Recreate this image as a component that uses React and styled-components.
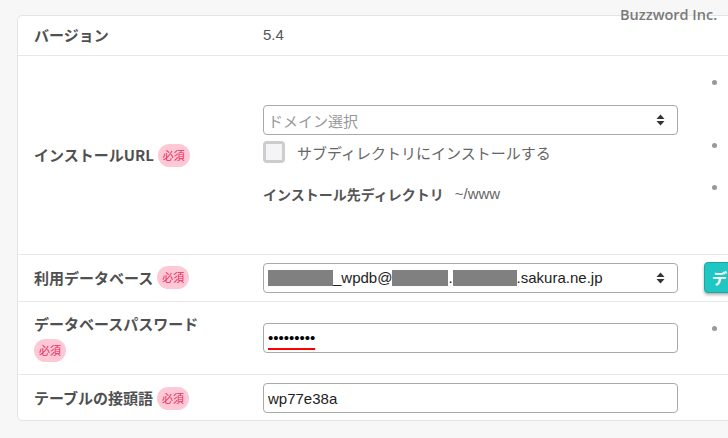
import React from "react"
import styled, { createGlobalStyle } from "styled-components"

const GlobalStyle = createGlobalStyle`
  html, body {
    margin: 0;
    background: #f7f7f7;
    overflow: hidden;
  }
  body {
    font-family: "Liberation Sans", "Noto Sans CJK JP", sans-serif;
  }
`

const Page = styled.div`
  position: relative;
  width: 728px;
  height: 438px;
  padding: 15px 0 0 17px;
  box-sizing: border-box;
`

const Watermark = styled.div`
  position: absolute;
  top: 5px;
  left: 620px;
  font-family: "Open Sans", "Liberation Sans", sans-serif;
  font-size: 14.5px;
  font-weight: 600;
  color: #7a7a7a;
`

const Card = styled.section`
  width: 1000px;
  background: #fff;
  border: 1px solid #e4e4e4;
  border-radius: 5px;
`

const Row = styled.div`
  display: grid;
  grid-template-columns: 245px 415px 1fr;
  align-items: center;
  padding: ${p => p.$pad || "8px 0"};
  border-bottom: ${p => (p.$last ? "none" : "1px solid #e8e8e8")};
`

const Label = styled.div`
  display: flex;
  flex-wrap: wrap;
  align-items: center;
  gap: 4px 4px;
  padding: 0 45px 0 16px;
  font-family: "Noto Sans CJK JP", sans-serif;
  font-size: 15px;
  font-weight: 700;
  line-height: 22px;
  color: #505050;
`

const Badge = styled.span`
  display: inline-block;
  padding: 0 5px;
  height: 23px;
  line-height: 23px;
  border-radius: 12px;
  background: #ffc8d7;
  color: #e8285a;
  font-size: 11px;
  font-weight: 400;
`

const Field = styled.div`
  display: flex;
  flex-direction: column;
`

const Value = styled.span`
  font-size: 15px;
  color: #555;
  line-height: 22px;
`

const Box = styled.div`
  display: flex;
  align-items: center;
  height: 30px;
  box-sizing: border-box;
  padding: 0 12px 0 4px;
  border: 1px solid #a9a9a9;
  border-radius: 4px;
  background: #fff;
  font-size: 15px;
  color: ${p => (p.$placeholder ? "#999" : "#222")};
  font-family: ${p =>
    p.$placeholder ? '"Noto Sans CJK JP", sans-serif' : '"Liberation Sans", "Noto Sans CJK JP", sans-serif'};
`

const BoxText = styled.span`
  flex: 1;
  display: flex;
  align-items: center;
  white-space: nowrap;
`

const Redacted = styled.span`
  display: inline-block;
  width: ${p => p.$w}px;
  height: 16px;
  background: #808080;
`

const Dots = styled.span`
  color: #000;
  text-decoration: underline;
  text-decoration-color: #f00;
  text-decoration-thickness: 2px;
  text-underline-offset: 5px;
`

const CheckRow = styled.label`
  display: flex;
  align-items: center;
  gap: 12px;
  margin-top: 6px;
  font-family: "Noto Sans CJK JP", sans-serif;
  font-size: 15px;
  color: #666;
`

const CheckBox = styled.span`
  width: 22px;
  height: 22px;
  box-sizing: border-box;
  border: 3px solid #cdcdcd;
  border-radius: 4px;
  background: #f4f4f7;
`

const DirRow = styled.div`
  display: flex;
  align-items: center;
  gap: 11px;
  margin-top: 20px;
  line-height: 22px;
`

const DirLabel = styled.span`
  font-family: "Noto Sans CJK JP", sans-serif;
  font-size: 14px;
  font-weight: 700;
  color: #555;
`

const DirValue = styled.span`
  font-size: 15px;
  color: #666;
`

const Aside = styled.div`
  align-self: start;
  padding-left: 26px;
  margin-top: ${p => p.$offset || 0}px;
`

const Hints = styled.ul`
  margin: 0;
  padding: 0;
  list-style: none;
  font-size: 13px;
  color: #8a8a8a;
`

const Hint = styled.li`
  height: ${p => p.$lines * 21}px;
  line-height: 21px;
  white-space: nowrap;
  overflow: hidden;

  &::before {
    content: "";
    display: inline-block;
    width: 5px;
    height: 5px;
    margin: 0 16px 0 8px;
    border-radius: 50%;
    background: #999;
    vertical-align: middle;
  }
`

const TealButton = styled.button`
  height: 31px;
  padding: 0 7px;
  border: 1px solid #18a9a5;
  border-radius: 4px;
  background: #20c6c2;
  box-shadow: 0 2px 3px rgba(0, 0, 0, 0.3);
  color: #fff;
  font-family: "Noto Sans CJK JP", sans-serif;
  font-size: 15px;
  font-weight: 700;
  white-space: nowrap;
`

const Arrows = () => (
  <svg width="9" height="12" viewBox="0 0 9 12">
    <path d="M4.5 0.5 L8.5 5 L0.5 5 Z" fill="#333" />
    <path d="M4.5 11.5 L8.5 7 L0.5 7 Z" fill="#333" />
  </svg>
)

const Required = () => <Badge>必須</Badge>

export default function App() {
  return (
    <>
      <GlobalStyle />
      <Page>
        <Watermark>Buzzword Inc.</Watermark>
        <Card>
          <Row $pad="8px 0 9px">
            <Label>バージョン</Label>
            <Field>
              <Value>5.4</Value>
            </Field>
          </Row>

          <Row $pad="15px 0">
            <Label>
              インストールURL
              <Required />
            </Label>
            <Field>
              <Box $placeholder>
                <BoxText>ドメイン選択</BoxText>
                <Arrows />
              </Box>
              <CheckRow>
                <CheckBox />
                サブディレクトリにインストールする
              </CheckRow>
              <DirRow>
                <DirLabel>インストール先ディレクトリ</DirLabel>
                <DirValue>~/www</DirValue>
              </DirRow>
            </Field>
            <Aside>
              <Hints>
                <Hint $lines={3}>ドメインを選択してください。</Hint>
                <Hint $lines={2}>サブディレクトリにインストールする場合はチェックしてください。</Hint>
                <Hint $lines={3}>インストール先のディレクトリです。</Hint>
              </Hints>
            </Aside>
          </Row>

          <Row $pad="7px 0 8px">
            <Label>
              利用データベース
              <Required />
            </Label>
            <Field>
              <Box>
                <BoxText>
                  <Redacted $w={65} />
                  _wpdb@
                  <Redacted $w={56} />.
                  <Redacted $w={64} />
                  .sakura.ne.jp
                </BoxText>
                <Arrows />
              </Box>
            </Field>
            <Aside>
              <TealButton>データベースを作成</TealButton>
            </Aside>
          </Row>

          <Row $pad="11px 0 12px">
            <Label>
              データベースパスワード
              <Required />
            </Label>
            <Field>
              <Box>
                <BoxText>
                  <Dots>•••••••••</Dots>
                </BoxText>
              </Box>
            </Field>
            <Aside $offset={4}>
              <Hints>
                <Hint $lines={2}>データベースのパスワードを入力してください。</Hint>
              </Hints>
            </Aside>
          </Row>

          <Row $pad="8px 0 7px" $last>
            <Label>
              テーブルの接頭語
              <Required />
            </Label>
            <Field>
              <Box>
                <BoxText>wp77e38a</BoxText>
              </Box>
            </Field>
          </Row>
        </Card>
      </Page>
    </>
  )
}
